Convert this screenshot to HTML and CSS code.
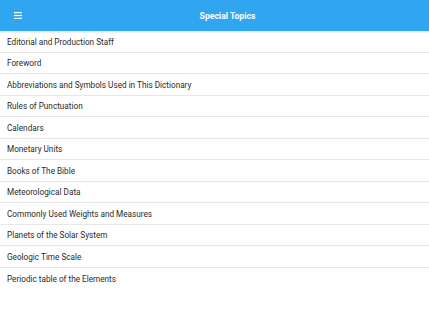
FILE: index.html
```html
<!DOCTYPE html>
<html lang="en">
<head>
    <meta charset="UTF-8">
    <meta name="viewport" content="width=device-width, initial-scale=1.0">
    <title>Special Topics</title>
    <link rel="stylesheet" href="styles.css">
</head>
<body>
    <header class="app-bar">
        <button class="menu-button" aria-label="Menu">
            <svg width="8" height="7" viewBox="0 0 8 7">
                <rect x="0" y="0" width="8" height="1.2" fill="#fff"/>
                <rect x="0" y="2.9" width="8" height="1.2" fill="#fff"/>
                <rect x="0" y="5.8" width="8" height="1.2" fill="#fff"/>
            </svg>
        </button>
        <h1 class="app-title">Special Topics</h1>
    </header>

    <ul class="topic-list">
        <li class="topic-item">Editorial and Production Staff</li>
        <li class="topic-item">Foreword</li>
        <li class="topic-item">Abbreviations and Symbols Used in This Dictionary</li>
        <li class="topic-item">Rules of Punctuation</li>
        <li class="topic-item">Calendars</li>
        <li class="topic-item">Monetary Units</li>
        <li class="topic-item">Books of The Bible</li>
        <li class="topic-item">Meteorological Data</li>
        <li class="topic-item">Commonly Used Weights and Measures</li>
        <li class="topic-item">Planets of the Solar System</li>
        <li class="topic-item">Geologic Time Scale</li>
        <li class="topic-item">Periodic table of the Elements</li>
    </ul>
</body>
</html>
```

FILE: styles.css
```css
* {
    box-sizing: border-box;
    margin: 0;
    padding: 0;
}

body {
    font-family: Roboto, "Liberation Sans", sans-serif;
    background-color: #fff;
    color: #2a2a2a;
}

.app-bar {
    height: 31px;
    background-color: #30a6f0;
    display: flex;
    align-items: center;
    box-shadow: 0 1px 2px rgba(0, 0, 0, 0.15);
}

.menu-button {
    width: 26px;
    height: 31px;
    padding-left: 14px;
    background: none;
    border: none;
    display: flex;
    align-items: center;
}

.app-title {
    flex: 1;
    text-align: center;
    color: #fff;
    font-size: 8.6px;
    font-weight: 700;
}

.topic-list {
    list-style: none;
}

.topic-item {
    height: 21.5px;
    display: flex;
    align-items: center;
    padding-left: 7px;
    padding-top: 1px;
    font-size: 8.2px;
    border-bottom: 1px solid #e8e8e8;
}

.topic-item:last-child {
    border-bottom: none;
}
```
